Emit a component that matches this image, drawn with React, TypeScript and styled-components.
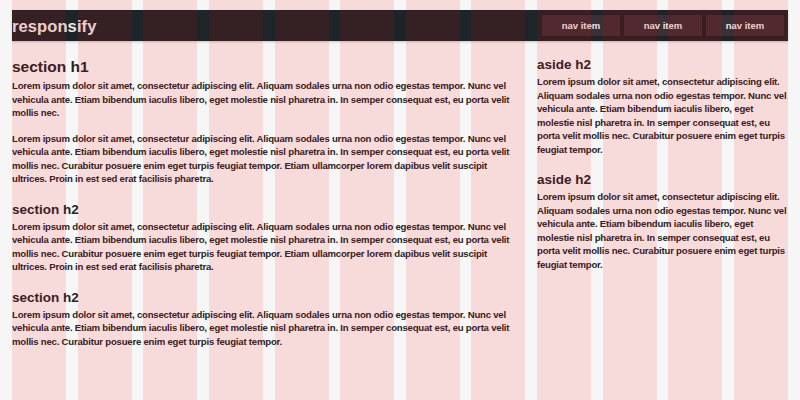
import React from 'react';
import styled, { createGlobalStyle } from 'styled-components';

const lorem1 =
  'Lorem ipsum dolor sit amet, consectetur adipiscing elit. Aliquam sodales urna non odio egestas tempor. Nunc vel vehicula ante. Etiam bibendum iaculis libero, eget molestie nisl pharetra in. In semper consequat est, eu porta velit mollis nec.';
const lorem2 =
  'Lorem ipsum dolor sit amet, consectetur adipiscing elit. Aliquam sodales urna non odio egestas tempor. Nunc vel vehicula ante. Etiam bibendum iaculis libero, eget molestie nisl pharetra in. In semper consequat est, eu porta velit mollis nec. Curabitur posuere enim eget turpis feugiat tempor. Etiam ullamcorper lorem dapibus velit suscipit ultrices. Proin in est sed erat facilisis pharetra.';
const lorem3 =
  'Lorem ipsum dolor sit amet, consectetur adipiscing elit. Aliquam sodales urna non odio egestas tempor. Nunc vel vehicula ante. Etiam bibendum iaculis libero, eget molestie nisl pharetra in. In semper consequat est, eu porta velit mollis nec. Curabitur posuere enim eget turpis feugiat tempor.';

const navItems = ['nav item', 'nav item', 'nav item'];

export default function App() {
  return (
    <>
      <GlobalStyle />
      <Page>
        <Header>
          <Logo>responsify</Logo>
          <Nav>
            {navItems.map((item, i) => (
              <NavItem key={i} href="#">
                {item}
              </NavItem>
            ))}
          </Nav>
        </Header>
        <Content>
          <Main>
            <H1>section h1</H1>
            <P>{lorem1}</P>
            <P>{lorem2}</P>
            <H2>section h2</H2>
            <P>{lorem2}</P>
            <H2>section h2</H2>
            <P>{lorem3}</P>
          </Main>
          <Aside>
            <H2 $first>aside h2</H2>
            <P>{lorem3}</P>
            <H2>aside h2</H2>
            <P>{lorem3}</P>
          </Aside>
        </Content>
        <GridOverlay>
          {Array.from({ length: 12 }).map((_, i) => (
            <Column key={i} />
          ))}
        </GridOverlay>
      </Page>
    </>
  );
}

const GlobalStyle = createGlobalStyle`
  html, body {
    margin: 0;
    padding: 0;
    height: 100%;
    background: #f6f6f6;
    font-family: 'Liberation Sans', Arial, sans-serif;
    overflow: hidden;
  }
`;

const Page = styled.div`
  position: relative;
  width: 776px;
  height: 390px;
  margin: 10px 12px 0;
`;

const Header = styled.header`
  display: flex;
  align-items: center;
  justify-content: space-between;
  height: 31px;
  background: #1d2529;
  box-shadow: 0 1px 2px rgba(0, 0, 0, 0.2);
`;

const Logo = styled.div`
  color: #ece6e6;
  font-size: 16.5px;
  font-weight: bold;
  letter-spacing: 0.1px;
  padding-top: 2px;
`;

const Nav = styled.nav`
  display: flex;
  gap: 2px;
  padding-right: 3px;
`;

const NavItem = styled.a`
  display: flex;
  align-items: center;
  justify-content: center;
  width: 80px;
  height: 23px;
  background: #3c2f35;
  border: 1px solid #241f24;
  box-sizing: border-box;
  color: #eee6e6;
  font-size: 9.5px;
  font-weight: bold;
  text-decoration: none;
`;

const Content = styled.div`
  display: grid;
  grid-template-columns: 508px 251px;
  column-gap: 17px;
  padding-top: 16px;
  color: #262426;
`;

const Main = styled.section``;

const Aside = styled.aside`
  margin-top: -2px;
`;

const H1 = styled.h1`
  margin: 0 0 2px;
  font-size: 15.5px;
  line-height: 20px;
  font-weight: bold;
`;

const H2 = styled.h2<{ $first?: boolean }>`
  margin: ${(p) => (p.$first ? '0' : '14px')} 0 0;
  font-size: 13.5px;
  line-height: 20px;
  font-weight: bold;
`;

const P = styled.p`
  margin: 0 0 12px;
  font-size: 9.6px;
  line-height: 13.5px;
  font-weight: bold;
  letter-spacing: -0.22px;
`;

const GridOverlay = styled.div`
  position: absolute;
  top: -10px;
  left: 0;
  right: 0;
  bottom: -10px;
  display: grid;
  grid-template-columns: repeat(12, 1fr);
  column-gap: 11.6px;
  pointer-events: none;
`;

const Column = styled.div`
  background: rgba(255, 0, 0, 0.11);
`;
